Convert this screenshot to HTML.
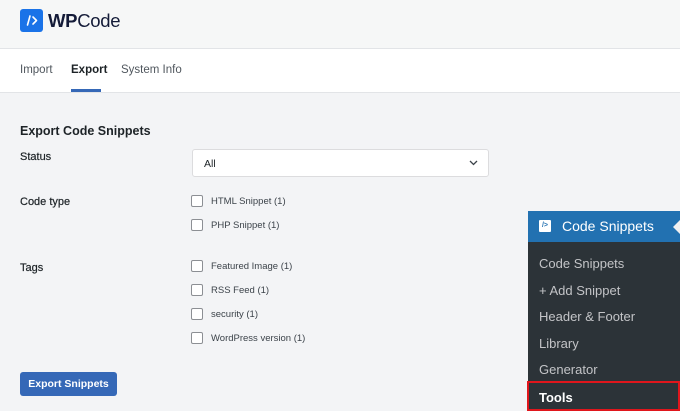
<!DOCTYPE html>
<html><head><meta charset="utf-8"><style>
*{margin:0;padding:0;box-sizing:border-box}
body{width:680px;height:411px;overflow:hidden;background:#f3f4f6;font-family:"Liberation Sans",sans-serif;position:relative;color:#1d2327}
.hdr{position:absolute;left:0;top:0;width:680px;height:49px;background:#f6f7f7;border-bottom:1px solid #e2e4e7}
.logo{position:absolute;left:20px;top:9px;width:23px;height:23px;background:#1a73e8;border-radius:3px}
.brand{position:absolute;left:48px;top:10px;font-size:18.5px;color:#141b38;letter-spacing:-0.3px}
.tabs{position:absolute;left:0;top:49px;width:680px;height:44px;background:#fff;border-bottom:1px solid #e2e4e7}
.tab{position:absolute;top:15px;font-size:11.5px;color:#50575e}
.ul{position:absolute;left:71px;top:40px;width:30px;height:3px;background:#3568b7}
.t{position:absolute;font-size:11px;color:#1d2327;-webkit-text-stroke:0.2px #1d2327}
.h{position:absolute;left:20px;top:124px;font-size:12.5px;font-weight:bold}
.sel{position:absolute;left:192px;top:149px;width:297px;height:28px;background:#fff;border:1px solid #dcdcde;border-radius:3px}
.cb{position:absolute;left:191px;width:12px;height:12px;border:1px solid #8c8f94;border-radius:2px;background:#fff}
.cl{position:absolute;left:211px;font-size:9.5px;color:#3c434a}
.btn{position:absolute;left:20px;top:372px;width:97px;height:24px;background:#3568b7;color:#fff;border-radius:3px;font-size:10.5px;font-weight:bold;text-align:center;line-height:24px}
.menu{position:absolute;left:528px;top:211px;width:152px;height:200px;background:#2c3338}
.mh{position:absolute;left:0;top:0;width:152px;height:31px;background:#2271b1}
.mi{position:absolute;left:11px;font-size:13px;color:#c3c4c7}
</style></head><body>
<div class="hdr"><div class="logo"><svg width="23" height="23" viewBox="0 0 23 23"><path d="M10 7L7.5 16M13 8l3.5 3.5L13 15" stroke="#fff" stroke-width="1.6" fill="none" stroke-linecap="round" stroke-linejoin="round"/></svg></div><div class="brand"><b>WP</b>Code</div></div>
<div class="tabs">
<div class="tab" style="left:20px">Import</div>
<div class="tab" style="left:71px;color:#1d2327;font-weight:bold">Export</div>
<div class="tab" style="left:121px">System Info</div>
<div class="ul"></div></div>
<div class="h">Export Code Snippets</div>
<div class="t" style="left:20px;top:151px">Status</div>
<div class="sel"><span style="position:absolute;left:11px;top:8px;font-size:10.5px">All</span>
<svg style="position:absolute;right:10px;top:10px" width="9" height="6" viewBox="0 0 9 6"><path d="M1 1l3.5 3.5L8 1" stroke="#3c434a" stroke-width="1.3" fill="none"/></svg></div>
<div class="t" style="left:20px;top:196px">Code type</div>
<div class="cb" style="top:195px"></div><div class="cl" style="top:196px">HTML Snippet (1)</div>
<div class="cb" style="top:219px"></div><div class="cl" style="top:220px">PHP Snippet (1)</div>
<div class="t" style="left:20px;top:262px">Tags</div>
<div class="cb" style="top:260px"></div><div class="cl" style="top:261px">Featured Image (1)</div>
<div class="cb" style="top:284px"></div><div class="cl" style="top:285px">RSS Feed (1)</div>
<div class="cb" style="top:308px"></div><div class="cl" style="top:309px">security (1)</div>
<div class="cb" style="top:332px"></div><div class="cl" style="top:333px">WordPress version (1)</div>
<div class="btn">Export Snippets</div>
<div class="menu">
<div class="mh"><div style="position:absolute;left:11px;top:9px;width:12px;height:12px;background:#fff;border-radius:1px;color:#2271b1;font-size:7px;font-weight:bold;text-align:center;line-height:12px">/&gt;</div>
<div style="position:absolute;left:34px;top:7px;font-size:14px;color:#fff">Code Snippets</div>
<div style="position:absolute;right:0;top:9px;width:0;height:0;border-top:7px solid transparent;border-bottom:7px solid transparent;border-right:7px solid #f0f0f1"></div></div>
<div class="mi" style="top:45px">Code Snippets</div>
<div class="mi" style="top:72px">+ Add Snippet</div>
<div class="mi" style="top:98px">Header &amp; Footer</div>
<div class="mi" style="top:125px">Library</div>
<div class="mi" style="top:151px">Generator</div>
<div style="position:absolute;left:-1px;top:170px;width:153px;height:30px;border:2px solid #e0161c"></div>
<div class="mi" style="top:179px;color:#fff;font-weight:bold">Tools</div>
</div>
</body></html>
